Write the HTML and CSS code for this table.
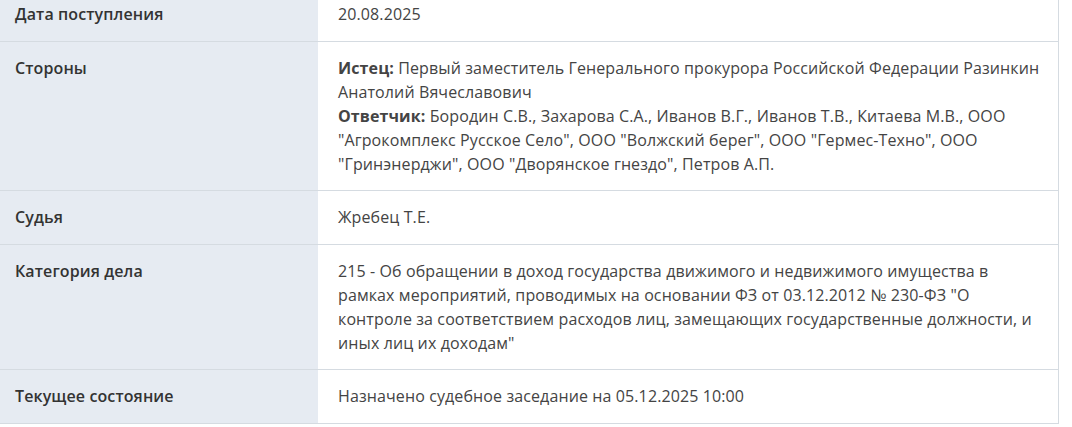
FILE: index.html
```html
<!DOCTYPE html>
<html lang="ru">
<head>
<meta charset="utf-8">
<link rel="stylesheet" href="styles.css">
</head>
<body>
<div class="case">
  <div class="row">
    <div class="label">Дата поступления</div>
    <div class="value">20.08.2025</div>
  </div>
  <div class="row">
    <div class="label">Стороны</div>
    <div class="value"><b>Истец:</b> Первый заместитель Генерального прокурора Российской Федерации Разинкин Анатолий Вячеславович<br><b>Ответчик:</b> Бородин С.В., Захарова С.А., Иванов В.Г., Иванов Т.В., Китаева М.В., ООО "Агрокомплекс Русское Село", ООО "Волжский берег", ООО "Гермес-Техно", ООО "Гринэнерджи", ООО "Дворянское гнездо", Петров А.П.</div>
  </div>
  <div class="row">
    <div class="label">Судья</div>
    <div class="value">Жребец Т.Е.</div>
  </div>
  <div class="row">
    <div class="label">Категория дела</div>
    <div class="value">215 - Об обращении в доход государства движимого и недвижимого имущества в рамках мероприятий, проводимых на основании ФЗ от 03.12.2012 № 230-ФЗ "О контроле за соответствием расходов лиц, замещающих государственные должности, и иных лиц их доходам"</div>
  </div>
  <div class="row">
    <div class="label">Текущее состояние</div>
    <div class="value">Назначено судебное заседание на 05.12.2025 10:00</div>
  </div>
</div>
</body>
</html>
```

FILE: styles.css
```css
html, body {
  margin: 0;
  padding: 0;
  background: #fff;
}
body {
  font-family: "Open Sans", "Liberation Sans", sans-serif;
  font-size: 16px;
  line-height: 24px;
  letter-spacing: 0.11px;
  color: #444;
}
.case {
  width: 1059px;
  margin-top: -12px;
  border-right: 1px solid #d5dbe1;
  box-sizing: border-box;
}
.row {
  display: grid;
  grid-template-columns: 318px 1fr;
  border-bottom: 1px solid #d5dbe1;
}
.label {
  background: #e6ebf2;
  padding: 14px 15px 14.5px;
  font-weight: 600;
  color: #333;
}
.value {
  padding: 14px 15px 14.5px 20px;
  color: #444;
}
.value b {
  font-weight: 700;
  color: #444;
}
```
